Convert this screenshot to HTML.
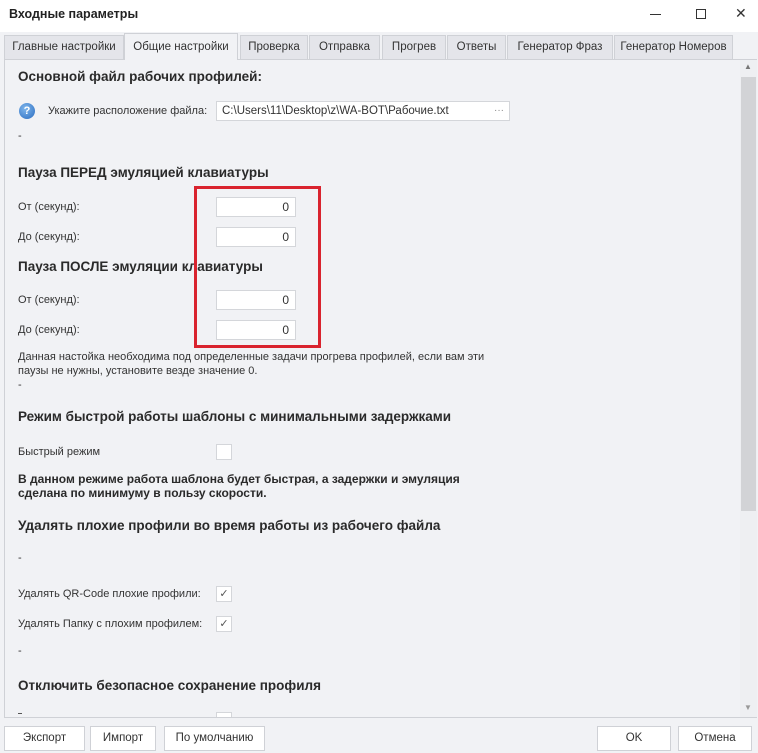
<!DOCTYPE html>
<html><head><meta charset="utf-8"><style>
*{margin:0;padding:0;box-sizing:border-box}
body{width:758px;height:753px;background:#f1f2f5;font-family:"Liberation Sans","DejaVu Sans",sans-serif;color:#333;position:relative;overflow:hidden;font-size:11px}
.a{position:absolute;white-space:nowrap}
#title{left:0;top:0;width:758px;height:32px;background:#fff}
.tab{position:absolute;top:35px;height:24px;background:#e4e5ea;border:1px solid #cfd1d6;border-bottom:none;font-size:11.5px;color:#333;text-align:center;line-height:22px}
.tab.act{top:33px;height:27px;background:#f1f2f5;line-height:26px}
#panel{left:4px;top:59px;width:753px;height:659px;border:1px solid #cfd1d6;border-right:none;background:#f1f2f5}
h{position:absolute;font-weight:bold;font-size:13.5px;color:#2a2a2a;white-space:nowrap}
.l{position:absolute;font-size:11px;color:#333;white-space:nowrap}
.in{position:absolute;background:#fff;border:1px solid #d4d6da;height:20px;width:80px;text-align:right;padding-right:6px;line-height:18px;font-size:12px}
.cb{position:absolute;width:16px;height:16px;background:#fff;border:1px solid #d4d6da;font-size:11px;text-align:center;line-height:14px;color:#555}
.btn{position:absolute;top:726px;height:25px;background:#fff;border:1px solid #cfd1d6;text-align:center;line-height:23px;font-size:11.5px;color:#333}
</style></head><body>
<div class="a" id="title"></div>
<div class="a" style="left:9px;top:7px;font-weight:bold;font-size:12.5px;color:#222">Входные параметры</div>
<div class="a" style="left:650px;top:14px;width:11px;height:1px;background:#333"></div>
<div class="a" style="left:696px;top:9px;width:10px;height:10px;border:1px solid #333"></div>
<div class="a" style="left:735px;top:5px;font-size:14px;color:#333">✕</div>

<div class="a" id="panel"></div>
<div class="tab" style="left:4px;width:120px">Главные настройки</div>
<div class="tab act" style="left:124px;width:114px;border-color:#cfd1d6">Общие настройки</div>
<div class="tab" style="left:240px;width:68px">Проверка</div>
<div class="tab" style="left:309px;width:71px">Отправка</div>
<div class="tab" style="left:382px;width:64px">Прогрев</div>
<div class="tab" style="left:447px;width:59px">Ответы</div>
<div class="tab" style="left:507px;width:106px">Генератор Фраз</div>
<div class="tab" style="left:614px;width:119px">Генератор Номеров</div>

<div class="a" style="left:740px;top:60px;width:17px;height:657px;background:#eeeff2"></div>
<div class="a" style="left:741px;top:77px;width:15px;height:434px;background:#d2d3d6"></div>
<div class="a" style="left:744px;top:62px;font-size:8px;color:#777">▲</div>
<div class="a" style="left:744px;top:703px;font-size:8px;color:#999">▼</div>

<h style="left:18px;top:69px">Основной файл рабочих профилей:</h>
<div class="a" style="left:19px;top:103px;width:16px;height:16px;border-radius:50%;background:radial-gradient(circle at 40% 35%,#7fb6ec,#2a6cc0);color:#fff;font-size:11px;font-weight:bold;text-align:center;line-height:16px">?</div>
<div class="l" style="left:48px;top:105px">Укажите расположение файла:</div>
<div class="a" style="left:216px;top:101px;width:294px;height:20px;background:#fff;border:1px solid #d4d6da;font-size:11.5px;line-height:18px;padding-left:5px">C:\Users\11\Desktop\z\WA-BOT\Рабочие.txt<span style="position:absolute;right:5px;color:#888;font-size:10px">···</span></div>
<div class="l" style="left:18px;top:130px">-</div>

<h style="left:18px;top:165px">Пауза ПЕРЕД эмуляцией клавиатуры</h>
<div class="l" style="left:18px;top:201px">От (секунд):</div>
<div class="in" style="left:216px;top:197px">0</div>
<div class="l" style="left:18px;top:231px">До (секунд):</div>
<div class="in" style="left:216px;top:227px">0</div>
<h style="left:18px;top:259px">Пауза ПОСЛЕ эмуляции клавиатуры</h>
<div class="l" style="left:18px;top:294px">От (секунд):</div>
<div class="in" style="left:216px;top:290px">0</div>
<div class="l" style="left:18px;top:324px">До (секунд):</div>
<div class="in" style="left:216px;top:320px">0</div>
<div class="a" style="left:194px;top:186px;width:127px;height:162px;border:3px solid #d9232e"></div>

<div class="l" style="left:18px;top:350px;line-height:14px">Данная настойка необходима под определенные задачи прогрева профилей, если вам эти<br>паузы не нужны, установите везде значение 0.<br>-</div>

<h style="left:18px;top:409px">Режим быстрой работы шаблоны с минимальными задержками</h>
<div class="l" style="left:18px;top:446px">Быстрый режим</div>
<div class="cb" style="left:216px;top:444px"></div>
<div class="l" style="left:18px;top:472px;font-weight:bold;font-size:12px;line-height:14px;color:#2a2a2a">В данном режиме работа шаблона будет быстрая, а задержки и эмуляция<br>сделана по минимуму в пользу скорости.</div>

<h style="left:18px;top:518px">Удалять плохие профили во время работы из рабочего файла</h>
<div class="l" style="left:18px;top:552px">-</div>
<div class="l" style="left:18px;top:588px">Удалять QR-Code плохие профили:</div>
<div class="cb" style="left:216px;top:586px">✓</div>
<div class="l" style="left:18px;top:618px">Удалять Папку с плохим профилем:</div>
<div class="cb" style="left:216px;top:616px">✓</div>
<div class="l" style="left:18px;top:645px">-</div>
<h style="left:18px;top:678px">Отключить безопасное сохранение профиля</h>
<div class="a" style="left:216px;top:712px;width:16px;height:5px;background:#fff;border:1px solid #d4d6da;border-bottom:none"></div>
<div class="a" style="left:18px;top:713px;width:4px;height:1px;background:#555"></div>

<div class="btn" style="left:4px;width:81px">Экспорт</div>
<div class="btn" style="left:90px;width:66px">Импорт</div>
<div class="btn" style="left:164px;width:101px">По умолчанию</div>
<div class="btn" style="left:597px;width:74px">OK</div>
<div class="btn" style="left:678px;width:74px">Отмена</div>
</body></html>
